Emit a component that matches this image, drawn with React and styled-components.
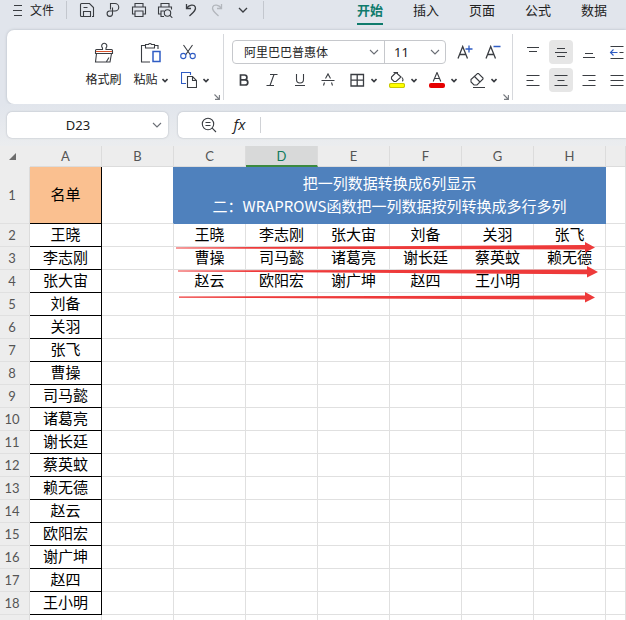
import React from "react";
import styled, { createGlobalStyle } from "styled-components";

const names = [
  "王晓", "李志刚", "张大宙", "刘备", "关羽", "张飞",
  "曹操", "司马懿", "诸葛亮", "谢长廷", "蔡英蚊", "赖无德",
  "赵云", "欧阳宏", "谢广坤", "赵四", "王小明",
];

const columns = ["A", "B", "C", "D", "E", "F", "G", "H"];
const tabs = ["开始", "插入", "页面", "公式", "数据"];
const WRAP = 6;

function Icon({ w = 16, h = 16, children, ...rest }) {
  return (
    <svg
      width={w}
      height={h}
      viewBox={`0 0 ${w} ${h}`}
      fill="none"
      stroke="#3a3d42"
      strokeWidth="1.1"
      aria-hidden="true"
      {...rest}
    >
      {children}
    </svg>
  );
}

const Chevron = () => (
  <Icon w={10} h={6} stroke="#6b6f76">
    <path d="M1 1l4 4 4-4" />
  </Icon>
);

const Caret = () => (
  <Icon w={6} h={5} strokeWidth="1.6">
    <path d="M0.5 1L3 3.5 5.5 1" />
  </Icon>
);

function Launcher({ label }) {
  return (
    <LauncherButton aria-label={label}>
      <Icon w={6} h={6} stroke="#777b80">
        <path d="M0.5 0.5l4.5 4.5M5.4 1v4.4H1" />
      </Icon>
    </LauncherButton>
  );
}

function QuickBar() {
  return (
    <TopBar>
      <FileButton>
        <Icon w={10} h={12}>
          <path d="M1 1.5h8M0 6.5h9M1 11.5h8" />
        </Icon>
        文件
      </FileButton>
      <Divider />
      <QuickIcons>
        <QuickButton aria-label="保存">
          <Icon>
            <path d="M2.500 1.500h8l4 4v9h-1.500M4 14.500H2.500a1 1 0 0 1-1-1v-11a1 1 0 0 1 1-1M4.500 14.500v-5h7v5zM4.500 5.500h4" />
          </Icon>
        </QuickButton>
        <QuickButton aria-label="输出为PDF">
          <Icon>
            <path d="M5.500 7.500V1.500h4.500a3.700 3.700 0 0 1 0 7.500H4.500a2.700 2.700 0 1 0 3 2.700V5.500" />
          </Icon>
        </QuickButton>
        <QuickButton aria-label="打印">
          <Icon>
            <path d="M4 5V1.500h8V5M4 12H1.500V5h13v7H12M4 9h8v5.500H4z" />
          </Icon>
        </QuickButton>
        <QuickButton aria-label="打印预览">
          <Icon>
            <path d="M4 5V1.500h8V5M4 12H1.500V5h13v2.500M6 14.500H4V9h3M6 14.500h1" />
            <circle cx="10.500" cy="11" r="3.200" />
            <path d="M12.700 13.200l2.600 2.600" />
          </Icon>
        </QuickButton>
        <QuickButton aria-label="撤销">
          <Icon>
            <path d="M3.500 2v4.500H8M3.700 6.200C6 2.800 11 2 12.300 5c1.200 3-2 5.500-5.800 9" strokeWidth="1.3" />
          </Icon>
        </QuickButton>
        <QuickButton aria-label="恢复" disabled>
          <Icon stroke="#b3b7bd">
            <path d="M12.500 2v4.500H8M12.300 6.200C10 2.800 5 2 3.700 5c-1.200 3 2 5.500 5.800 9" strokeWidth="1.3" />
          </Icon>
        </QuickButton>
        <QuickButton aria-label="更多">
          <Icon w={10} h={6} strokeWidth="1.3">
            <path d="M1 1l4 4 4-4" />
          </Icon>
        </QuickButton>
      </QuickIcons>
      <Divider />
      <Tabs>
        {tabs.map((tab, i) => (
          <Tab key={tab} $active={i === 0}>
            {tab}
          </Tab>
        ))}
      </Tabs>
    </TopBar>
  );
}

function ClipboardTools() {
  return (
    <ClipboardGroup>
      <BigButton>
        <Icon w={22} h={22}>
          <path d="M9.500 8.500V6.800a2.600 2.600 0 1 1 3.500 0v1.700h5.500a1 1 0 0 1 1 1v3h-17v-3a1 1 0 0 1 1-1zM3.500 12.500l-1 8.500h14.500l1.500-8.500M13.500 20.500l2.500-4" />
          <path d="M3 10.500h16" stroke="#d9532c" />
        </Icon>
        <span>格式刷</span>
      </BigButton>
      <BigButton>
        <Icon w={22} h={22}>
          <path d="M10 21H1.500V4.500h4M14 4.500h4V8M5.500 7V3.500h3a1.600 1.600 0 0 1 3 0h3V7z" />
          <path d="M13 10.500h7v10h-7z" stroke="#2f5cc4" strokeWidth="1.5" />
        </Icon>
        <span>
          粘贴
          <Caret />
        </span>
      </BigButton>
      <SmallTools>
        <ToolButton $wide aria-label="剪切">
          <Icon>
            <path d="M3.500 1l7 10M12.500 1L5.500 11" />
            <circle cx="3.300" cy="12" r="2.600" stroke="#2f5cc4" />
            <circle cx="12.700" cy="12" r="2.600" stroke="#2f5cc4" />
          </Icon>
        </ToolButton>
        <ToolButton $split aria-label="复制">
          <Icon>
            <path d="M5 11.500H0.500V0.500h9V3" stroke="#2f5cc4" />
            <path d="M6.500 4.500h5l4 4v7h-9zM11.500 4.500v4h4" />
          </Icon>
          <Caret />
        </ToolButton>
      </SmallTools>
      <Launcher label="剪贴板设置" />
    </ClipboardGroup>
  );
}

function FontTools() {
  return (
    <FontGroup>
      <ToolRow>
        <FontBox>
          <Picker $width={151}>
            <select aria-label="字体" defaultValue="阿里巴巴普惠体">
              <option>阿里巴巴普惠体</option>
            </select>
            <Chevron />
          </Picker>
          <Picker $width={61} $large>
            <select aria-label="字号" defaultValue="11">
              <option>11</option>
            </select>
            <Chevron />
          </Picker>
        </FontBox>
        <ToolButton $wide aria-label="增大字号">
          <Icon>
            <path d="M1 14.500L5.700 2.500l4.800 12M2.800 10.500h6" strokeWidth="1.300" />
            <path d="M12 1.500v7M8.500 5h7" stroke="#2f5cc4" strokeWidth="1.300" />
          </Icon>
        </ToolButton>
        <ToolButton $wide aria-label="减小字号">
          <Icon>
            <path d="M1 14.500L5.700 2.500l4.800 12M2.800 10.500h6" strokeWidth="1.300" />
            <path d="M8.500 2.500h7" stroke="#2f5cc4" strokeWidth="1.300" />
          </Icon>
        </ToolButton>
      </ToolRow>
      <ToolRow>
        <ToolButton $wide aria-label="加粗">
          <Icon>
            <path d="M4.500 3h4a2.400 2.400 0 0 1 0 4.800h-4zM4.500 7.800h4.700a2.600 2.600 0 0 1 0 5.200H4.500z" strokeWidth="1.700" />
          </Icon>
        </ToolButton>
        <ToolButton $wide aria-label="倾斜">
          <Icon>
            <path d="M6 2.500h7.500M2.500 13.500H10M10 2.500l-4 11" />
          </Icon>
        </ToolButton>
        <ToolButton $wide aria-label="下划线">
          <Icon>
            <path d="M4.500 2v5.500a3.500 3.500 0 0 0 7 0V2M3 13.500h10" />
          </Icon>
        </ToolButton>
        <ToolButton $wide aria-label="删除线">
          <Icon>
            <path d="M1.500 8.500h13M5.500 6.500L8 2l2.500 4.500M4.500 10.500L3.500 13.500M11.500 10.500l1 3" />
          </Icon>
        </ToolButton>
        <ToolButton $split aria-label="边框">
          <Icon>
            <path d="M2 2.500h12.500v11.500H2zM8.200 2.500V14M2 8.200h12.500" strokeWidth="1.300" />
          </Icon>
          <Caret />
        </ToolButton>
        <ToolButton $split aria-label="填充颜色">
          <Icon>
            <path d="M7 0.500l5 4.500-5 4.500H5L2.500 7V5L7 0.500M4.500 0.500h4v2.500M13 5.500c1.500 2 1.200 3.500 0 3.500" />
            <rect x="0.500" y="11.500" width="15" height="4" rx="1.500" fill="#ffff00" stroke="#c9c900" />
          </Icon>
          <Caret />
        </ToolButton>
        <ToolButton $split aria-label="字体颜色">
          <Icon>
            <path d="M4.200 9.500L8 0.500l3.800 9M5.500 6.500h5" />
            <rect x="0" y="11" width="16" height="5" rx="2" fill="#e60000" stroke="none" />
          </Icon>
          <Caret />
        </ToolButton>
        <ToolButton $split aria-label="清除">
          <Icon>
            <path d="M2 7.500L8.500 1.500h1L14 6v1l-6 6H5L2 10zM5.500 4.500l5.500 5.500M4 15.500h12" />
          </Icon>
          <Caret />
        </ToolButton>
      </ToolRow>
      <Launcher label="字体设置" />
    </FontGroup>
  );
}

function AlignTools() {
  return (
    <AlignGroup>
      <ToolButton aria-label="顶端对齐">
        <Icon>
          <path d="M2 3.500h12M4 7.500h8" />
        </Icon>
      </ToolButton>
      <ToolButton $on aria-label="垂直居中">
        <Icon>
          <path d="M4 4.500h8M2 8.500h12M4 12.500h8" />
        </Icon>
      </ToolButton>
      <ToolButton aria-label="底端对齐">
        <Icon>
          <path d="M4 9.500h8M2 13.500h12" />
        </Icon>
      </ToolButton>
      <ToolButton aria-label="减少缩进">
        <Icon>
          <path d="M1.500 2.500h13M10.500 8.500h4M1.500 14.500h13" />
          <path d="M8.500 8.500h-7M4.500 5.500l-3 3 3 3" stroke="#2f5cc4" />
        </Icon>
      </ToolButton>
      <ToolButton aria-label="左对齐">
        <Icon>
          <path d="M1.500 3.500h13M1.500 8.500h7M1.500 13.500h13" />
        </Icon>
      </ToolButton>
      <ToolButton $on aria-label="水平居中">
        <Icon>
          <path d="M1.500 3.500h13M4.500 8.500h7M1.500 13.500h13" />
        </Icon>
      </ToolButton>
      <ToolButton aria-label="右对齐">
        <Icon>
          <path d="M1.500 3.500h13M7.500 8.500h7M1.500 13.500h13" />
        </Icon>
      </ToolButton>
      <ToolButton aria-label="两端对齐">
        <Icon>
          <path d="M1.500 3.500h13M1.500 8.500h13M1.500 13.500h13" />
        </Icon>
      </ToolButton>
    </AlignGroup>
  );
}

function FormulaBar() {
  return (
    <FormulaRow>
      <NameBox>
        <input aria-label="名称框" defaultValue="D23" />
        <Chevron />
      </NameBox>
      <FormulaBox>
        <ToolButton $wide aria-label="缩小">
          <Icon>
            <circle cx="7" cy="7" r="5.700" />
            <path d="M4.500 5.500h5M4.500 8.500h5M11.200 11.200l3.800 3.800" />
          </Icon>
        </ToolButton>
        <FxButton aria-label="插入函数">fx</FxButton>
        <input aria-label="编辑栏" />
      </FormulaBox>
    </FormulaRow>
  );
}

function Grid() {
  return (
    <Sheet>
      <Table>
        <colgroup>
          <HeadCol />
          {columns.map((c) => (
            <DataCol key={c} />
          ))}
          <col />
        </colgroup>
        <thead>
          <tr>
            <ColHead aria-label="全选">
              <Icon w={8} h={8} stroke="none">
                <path d="M7 1v7H0z" fill="#6d6d6d" />
              </Icon>
            </ColHead>
            {columns.map((c) => (
              <ColHead key={c} $selected={c === "D"}>
                {c}
              </ColHead>
            ))}
            <ColHead />
          </tr>
        </thead>
        <tbody>
          <tr>
            <RowHead>1</RowHead>
            <ListTitle>名单</ListTitle>
            <Cell $edge="#4f81bd" />
            <Banner colSpan={6}>
              把一列数据转换成6列显示
              <br />
              二：WRAPROWS函数把一列数据按列转换成多行多列
            </Banner>
            <Cell />
          </tr>
          {names.map((name, i) => (
            <tr key={name}>
              <RowHead>{i + 2}</RowHead>
              <Cell $boxed>{name}</Cell>
              <Cell />
              {columns.slice(2).map((c, j) => (
                <Cell key={c}>{names[i * WRAP + j]}</Cell>
              ))}
              <Cell />
            </tr>
          ))}
          <tr>
            <RowHead />
            {[...columns, "I"].map((c) => (
              <Cell key={c} />
            ))}
          </tr>
        </tbody>
      </Table>
      <Arrows width="430" height="64" viewBox="0 0 430 64" aria-hidden="true">
        <path d="M4 6.500L413 4V1l10 5.500-10 5V8.500L4 7.500z" />
        <path d="M6 29.500L415 28.500V25l11 6-11 5.500V33.200L6 30.500z" />
        <path d="M7 55.500L413 54.500V51l10 5.500-10 5V58.500L7 56.800z" />
      </Arrows>
    </Sheet>
  );
}

export default function App() {
  return (
    <Page>
      <GlobalStyle />
      <QuickBar />
      <Ribbon>
        <ClipboardTools />
        <FontTools />
        <AlignTools />
      </Ribbon>
      <FormulaBar />
      <Grid />
    </Page>
  );
}

const GlobalStyle = createGlobalStyle`
  * {
    box-sizing: border-box;
  }
  body {
    margin: 0;
    font-family: "Noto Sans", "Noto Sans CJK SC", sans-serif;
    font-size: 12px;
    color: #222;
  }
  button, input, select {
    font: inherit;
    color: inherit;
    border: 0;
    padding: 0;
    margin: 0;
    background: transparent;
  }
  svg {
    display: block;
    flex: none;
  }
`;

const Page = styled.div`
  display: flex;
  flex-direction: column;
  height: 100vh;
  overflow: hidden;
  background: #e1e5ec;
`;

const TopBar = styled.header`
  display: flex;
  align-items: center;
  height: 30px;
  padding: 0 0 10px 13px;
  flex: none;
`;

const FileButton = styled.button`
  display: flex;
  align-items: center;
  gap: 7px;
  width: 53px;
  white-space: nowrap;
`;

const Divider = styled.span`
  width: 1px;
  height: 18px;
  background: #c3c7ce;
`;

const QuickIcons = styled.div`
  display: flex;
  width: 196px;
  padding-left: 7px;
`;

const QuickButton = styled.button`
  display: flex;
  align-items: center;
  justify-content: center;
  width: 26px;
  height: 20px;
`;

const Tabs = styled.nav`
  display: flex;
  gap: 30px;
  padding-left: 93px;
`;

const Tab = styled.button`
  height: 26px;
  margin-top: 4px;
  padding-bottom: 2px;
  font-size: 13px;
  line-height: 20px;
  white-space: nowrap;
  border-bottom: 2px solid ${(p) => (p.$active ? "#0f7b6c" : "transparent")};
  color: ${(p) => (p.$active ? "#0f7b6c" : "#222")};
  font-weight: ${(p) => (p.$active ? 700 : 400)};
`;

const Ribbon = styled.section`
  display: flex;
  flex: none;
  height: 74px;
  margin-left: 7px;
  overflow: hidden;
  background: #fff;
  border-radius: 7px 0 0 7px;
  box-shadow: 0 0 3px #b4b9c1;
`;

const Group = styled.div`
  position: relative;
  flex: none;

  &:not(:last-child)::after {
    content: "";
    position: absolute;
    top: 4px;
    bottom: 4px;
    right: 0;
    width: 1px;
    background: #d6d8dc;
  }
`;

const ClipboardGroup = styled(Group)`
  display: flex;
  width: 217px;
  padding: 10px 0 0 73px;
`;

const FontGroup = styled(Group)`
  display: flex;
  flex-direction: column;
  gap: 4px;
  width: 289px;
  padding: 10px 0 0 6px;
`;

const AlignGroup = styled(Group)`
  display: grid;
  grid-template-columns: repeat(4, 24px);
  grid-auto-rows: 24px;
  gap: 4px;
  padding: 10px 8px 0;
`;

const BigButton = styled.button`
  display: flex;
  flex-direction: column;
  align-items: center;
  width: 47px;
  gap: 6px;
  padding-top: 1px;

  span {
    display: flex;
    align-items: center;
    gap: 4px;
    line-height: 22px;
    white-space: nowrap;
  }
`;

const SmallTools = styled.div`
  display: flex;
  flex-direction: column;
  gap: 4px;
`;

const ToolButton = styled.button`
  display: flex;
  align-items: center;
  justify-content: ${(p) => (p.$split ? "flex-start" : "center")};
  gap: 6px;
  width: ${(p) => (p.$split ? 40 : p.$wide ? 28 : 24)}px;
  height: 24px;
  padding-left: ${(p) => (p.$split ? 7 : 0)}px;
  border-radius: 4px;
  background: ${(p) => (p.$on ? "#e6e6e6" : "transparent")};
`;

const LauncherButton = styled.button`
  position: absolute;
  right: 4px;
  bottom: 4px;
`;

const ToolRow = styled.div`
  display: flex;
`;

const FontBox = styled.div`
  display: flex;
  height: 24px;
  margin: 0 5px 0 2px;
  border: 1px solid #c6c8cc;
  border-radius: 4px;
`;

const Picker = styled.label`
  display: grid;
  align-items: center;
  width: ${(p) => p.$width}px;

  & + & {
    border-left: 1px solid #c6c8cc;
  }
  select {
    grid-area: 1 / 1;
    appearance: none;
    height: 22px;
    padding-left: ${(p) => (p.$large ? 9 : 11)}px;
    font-size: ${(p) => (p.$large ? 13 : 12)}px;
    outline: none;
  }
  svg {
    grid-area: 1 / 1;
    justify-self: end;
    margin-right: 5px;
    pointer-events: none;
  }
`;

const FormulaRow = styled.div`
  display: flex;
  flex: none;
  gap: 10px;
  padding: 8px 0 8px 7px;
  background: linear-gradient(#e1e5ec, #ebedef);
`;

const NameBox = styled.label`
  display: grid;
  align-items: center;
  width: 161px;
  height: 26px;
  background: #fff;
  border-radius: 5px;
  box-shadow: 0 0 2px #a9aeb6;

  input {
    grid-area: 1 / 1;
    width: 100%;
    padding-right: 19px;
    text-align: center;
    font-size: 13px;
  }
  svg {
    grid-area: 1 / 1;
    justify-self: end;
    margin-right: 6px;
  }
`;

const FormulaBox = styled.div`
  display: flex;
  align-items: center;
  flex: 1;
  padding-left: 17px;
  background: #fff;
  border-radius: 5px 0 0 5px;
  box-shadow: 0 0 2px #a9aeb6;

  input {
    flex: 1;
    min-width: 0;
    height: 16px;
    border-left: 1px solid #d0d2d6;
  }
`;

const FxButton = styled.button`
  width: 37px;
  padding: 0 4px 2px 0;
  font-family: "Open Sans", sans-serif;
  font-size: 15px;
  font-style: italic;
  line-height: 20px;
`;

const Sheet = styled.main`
  position: relative;
  flex: 1;
  overflow: hidden;
  background: #fff;
`;

const Table = styled.table`
  width: 100%;
  table-layout: fixed;
  border-spacing: 0;
  text-align: center;
`;

const HeadCol = styled.col`
  width: 30px;
`;

const DataCol = styled.col`
  width: 72px;
`;

const ColHead = styled.th`
  height: 21px;
  padding: 0;
  font-family: Lato, sans-serif;
  font-size: 13px;
  font-weight: 400;
  line-height: 18px;
  color: ${(p) => (p.$selected ? "#0f7b5c" : "#555")};
  background: ${(p) => (p.$selected ? "#d8d9d9" : "#ededed")};
  border-right: 1px solid #dcdcdc;
  border-bottom: ${(p) => (p.$selected ? "2px solid #3c8a40" : "1px solid #dcdcdc")};

  &:first-child {
    border-color: #ededed;
  }
  svg {
    margin-left: 9px;
  }
`;

const RowHead = styled.th`
  padding: 0 5px 0 0;
  font-family: Lato, sans-serif;
  font-size: 13px;
  font-weight: 400;
  line-height: 22px;
  color: #555;
  background: #ededed;
  border-right: 1px solid #dcdcdc;
  border-bottom: 1px solid #e0e0e0;
`;

const Cell = styled.td`
  height: 23px;
  padding: 0 0 2px;
  font-family: "Noto Sans CJK SC", sans-serif;
  font-size: 15px;
  line-height: 20px;
  color: #000;
  white-space: nowrap;
  border-right: 1px solid ${(p) => (p.$boxed ? "#000" : p.$edge || "#e0e0e0")};
  border-bottom: 1px solid ${(p) => (p.$boxed ? "#000" : "#e0e0e0")};
`;

const ListTitle = styled(Cell)`
  height: 57px;
  background: #fac090;
  border-color: #000;
`;

const Banner = styled(Cell)`
  line-height: 23px;
  color: #fff;
  background: #4f81bd;
  border-color: #4f81bd;
`;

const Arrows = styled.svg`
  position: absolute;
  left: 172px;
  top: 95px;
  fill: #ee3a3a;
`;
